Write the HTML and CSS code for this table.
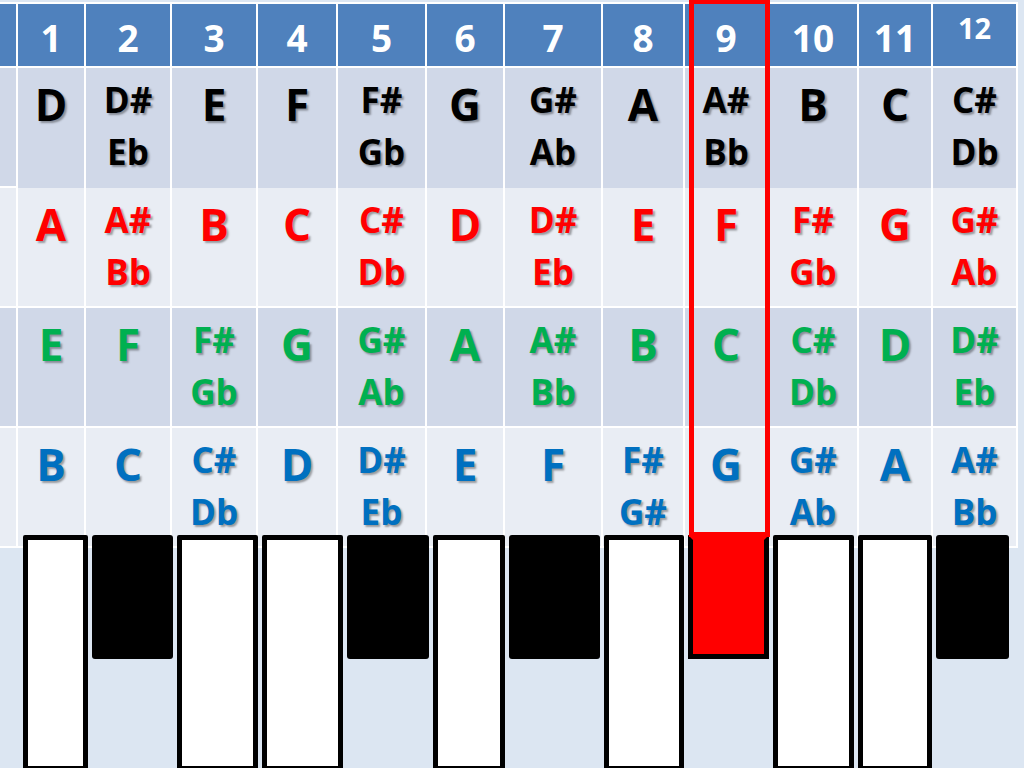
FILE: index.html
```html
<!DOCTYPE html>
<html lang="en">
<head>
    <meta charset="UTF-8">
    <meta name="viewport" content="width=device-width, initial-scale=1.0">
    <title>Guitar Fretboard Notes</title>
    <link rel="stylesheet" href="styles.css">
</head>
<body>
    <div class="slide">
        <div class="chart">
            <!-- fret numbers -->
            <div class="cell head"></div>
            <div class="cell head">1</div>
            <div class="cell head">2</div>
            <div class="cell head">3</div>
            <div class="cell head">4</div>
            <div class="cell head">5</div>
            <div class="cell head">6</div>
            <div class="cell head">7</div>
            <div class="cell head">8</div>
            <div class="cell head">9</div>
            <div class="cell head">10</div>
            <div class="cell head">11</div>
            <div class="cell head small">12</div>

            <!-- D string -->
            <div class="cell dark"></div>
            <div class="cell dark black one">D</div>
            <div class="cell dark black two">D#<br>Eb</div>
            <div class="cell dark black one">E</div>
            <div class="cell dark black one">F</div>
            <div class="cell dark black two">F#<br>Gb</div>
            <div class="cell dark black one">G</div>
            <div class="cell dark black two">G#<br>Ab</div>
            <div class="cell dark black one">A</div>
            <div class="cell dark black two">A#<br>Bb</div>
            <div class="cell dark black one">B</div>
            <div class="cell dark black one">C</div>
            <div class="cell dark black two">C#<br>Db</div>

            <!-- A string -->
            <div class="cell light"></div>
            <div class="cell light red one">A</div>
            <div class="cell light red two">A#<br>Bb</div>
            <div class="cell light red one">B</div>
            <div class="cell light red one">C</div>
            <div class="cell light red two">C#<br>Db</div>
            <div class="cell light red one">D</div>
            <div class="cell light red two">D#<br>Eb</div>
            <div class="cell light red one">E</div>
            <div class="cell light red one">F</div>
            <div class="cell light red two">F#<br>Gb</div>
            <div class="cell light red one">G</div>
            <div class="cell light red two">G#<br>Ab</div>

            <!-- E string -->
            <div class="cell dark"></div>
            <div class="cell dark green one">E</div>
            <div class="cell dark green one">F</div>
            <div class="cell dark green two">F#<br>Gb</div>
            <div class="cell dark green one">G</div>
            <div class="cell dark green two">G#<br>Ab</div>
            <div class="cell dark green one">A</div>
            <div class="cell dark green two">A#<br>Bb</div>
            <div class="cell dark green one">B</div>
            <div class="cell dark green one">C</div>
            <div class="cell dark green two">C#<br>Db</div>
            <div class="cell dark green one">D</div>
            <div class="cell dark green two">D#<br>Eb</div>

            <!-- B string -->
            <div class="cell light"></div>
            <div class="cell light blue one">B</div>
            <div class="cell light blue one">C</div>
            <div class="cell light blue two">C#<br>Db</div>
            <div class="cell light blue one">D</div>
            <div class="cell light blue two">D#<br>Eb</div>
            <div class="cell light blue one">E</div>
            <div class="cell light blue one">F</div>
            <div class="cell light blue two">F#<br>G#</div>
            <div class="cell light blue one">G</div>
            <div class="cell light blue two">G#<br>Ab</div>
            <div class="cell light blue one">A</div>
            <div class="cell light blue two">A#<br>Bb</div>
        </div>

        <div class="keys">
            <div class="key white k1"></div>
            <div class="key black k2"></div>
            <div class="key white k3"></div>
            <div class="key white k4"></div>
            <div class="key black k5"></div>
            <div class="key white k6"></div>
            <div class="key black k7"></div>
            <div class="key white k8"></div>
            <div class="key active k9"></div>
            <div class="key white k10"></div>
            <div class="key white k11"></div>
            <div class="key black k12"></div>
        </div>

        <!-- highlight on fret 9 -->
        <div class="marker"></div>
    </div>
</body>
</html>
```

FILE: styles.css
```css
/* Reset */
body {
    margin: 0;
    padding: 0;
    background-color: #dce6f2;
    font-family: "Open Sans", Lato, sans-serif;
    font-weight: 700;
}

.slide {
    position: relative;
    width: 1024px;
    height: 768px;
    overflow: hidden;
}

/* Note table */
.chart {
    display: grid;
    grid-template-columns: 16px 66px 84px 84px 78px 87px 76px 96px 80px 82px 88px 72px 83px;
    grid-template-rows: 62px repeat(4, 118px);
    gap: 2px;
    width: 1016px;
    margin-top: 2px;
    padding: 2px 2px 2px 0;
    background-color: #fff;
}

.cell {
    text-align: center;
    box-sizing: border-box;
}

.head {
    background-color: #4f81bd;
    color: #fff;
    font-size: 37px;
    line-height: 1;
    padding-top: 15px;
}

.head.small {
    font-size: 29px;
    padding-top: 9px;
}

.dark {
    background-color: #d0d8e8;
}

.light {
    background-color: #e9edf4;
}

.one {
    font-size: 44px;
    line-height: 1;
    padding-top: 14px;
}

.two {
    font-size: 35px;
    line-height: 52px;
    padding-top: 6px;
}

.black { color: #000; }
.red { color: #ff0000; }
.green { color: #00b050; }
.blue { color: #0070c0; }

.one, .two {
    text-shadow: 2px 2px 2px rgba(0, 0, 0, 0.35);
}

/* Keyboard */
.keys {
    display: flex;
    align-items: flex-start;
    gap: 4px;
    margin-top: -13px;
    padding-left: 23px;
}

.key {
    box-sizing: border-box;
    flex: none;
}

.white {
    height: 236px;
    background-color: #fff;
    border: 5px solid #000;
    border-radius: 2px;
}

.black {
    height: 124px;
}

.key.black {
    background-color: #000;
    border-radius: 3px;
}

.active {
    height: 124px;
    background-color: #ff0000;
    border: 5px solid #000;
    border-top-color: #ff0000;
}

.k1 { width: 65px; }
.k2 { width: 81px; }
.k3 { width: 81px; }
.k4 { width: 81px; }
.k5 { width: 82px; }
.k6 { width: 72px; }
.k7 { width: 91px; }
.k8 { width: 80px; }
.k9 { width: 81px; }
.k10 { width: 81px; }
.k11 { width: 74px; }
.k12 { width: 73px; }

.marker {
    position: absolute;
    left: 689px;
    top: -1px;
    width: 81px;
    height: 538px;
    box-sizing: border-box;
    border: 5px solid #ff0000;
}
```
